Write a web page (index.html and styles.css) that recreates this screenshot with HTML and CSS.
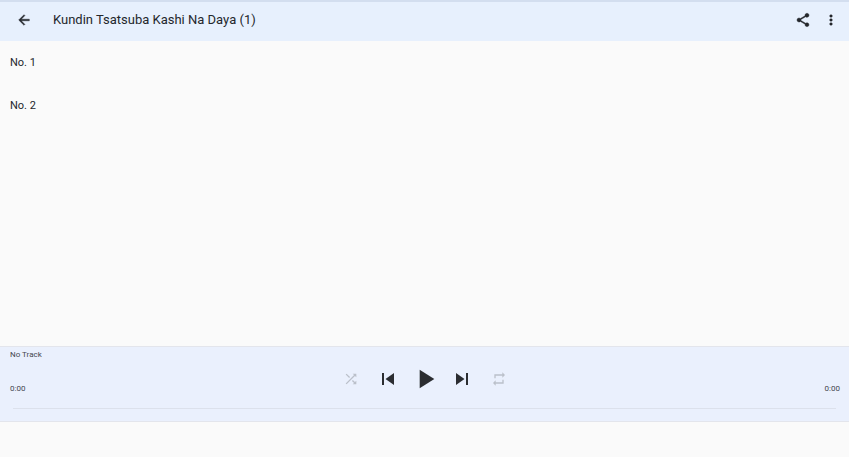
FILE: index.html
```html
<!DOCTYPE html>
<html lang="ha">
<head>
<meta charset="utf-8">
<meta name="viewport" content="width=device-width, initial-scale=1">
<title>Kundin Tsatsuba Kashi Na Daya (1)</title>
<link rel="stylesheet" href="styles.css">
</head>
<body>
<header class="app-bar">
  <button class="icon-button" aria-label="Back"><svg class="icon" viewBox="0 0 24 24"><path d="M20 10.8H8l5.4-5.4L12 4l-8 8 8 8 1.4-1.4L8 13.200H20z"/></svg></button>
  <h1 class="title">Kundin Tsatsuba Kashi Na Daya (1)</h1>
  <button class="icon-button" aria-label="Share"><svg class="icon" viewBox="0 0 24 24"><path d="M18 16.080c-.76 0-1.440.3-1.960.77L8.910 12.700c.05-.23.09-.46.09-.7s-.04-.47-.09-.7l7.050-4.110c.54.5 1.250.81 2.040.81 1.660 0 3-1.340 3-3s-1.340-3-3-3-3 1.340-3 3c0 .24.04.47.09.7L8.040 9.810C7.500 9.310 6.790 9 6 9c-1.660 0-3 1.340-3 3s1.340 3 3 3c.79 0 1.500-.31 2.040-.81l7.120 4.160c-.05.21-.08.43-.08.65 0 1.610 1.310 2.920 2.920 2.920s2.920-1.310 2.920-2.920-1.310-2.920-2.920-2.920z"/></svg></button>
  <button class="icon-button" aria-label="More options"><svg class="icon" viewBox="0 0 24 24"><circle cx="12" cy="6" r="2"/><circle cx="12" cy="12" r="2"/><circle cx="12" cy="18" r="2"/></svg></button>
</header>
<main class="content">
  <ul class="tracks">
    <li class="track">No. 1</li>
    <li class="track">No. 2</li>
  </ul>
</main>
<section class="player" aria-label="Player">
  <p class="now-playing">No Track</p>
  <div class="transport">
    <span class="time">0:00</span>
    <div class="controls">
      <button class="control muted" aria-label="Shuffle"><svg class="icon" viewBox="0 0 24 24"><path d="M10.590 9.170L5.410 4 4 5.410l5.170 5.170 1.420-1.410zM14.500 4l2.040 2.040L4 18.590 5.410 20 17.960 7.460 20 9.500V4h-5.500zm.33 9.410l-1.410 1.410 3.130 3.130L14.500 20H20v-5.500l-2.040 2.040-3.130-3.130z"/></svg></button>
      <button class="control" aria-label="Previous"><svg class="icon icon-skip" viewBox="0 0 24 24"><path d="M6 6h2v12H6zm3.500 6l8.500 6V6z"/></svg></button>
      <button class="control" aria-label="Play"><svg class="icon icon-play" viewBox="0 0 24 24"><path d="M8 5v14l11-7z"/></svg></button>
      <button class="control" aria-label="Next"><svg class="icon icon-skip" viewBox="0 0 24 24"><path d="M6 18l8.500-6L6 6v12zM16 6v12h2V6h-2z"/></svg></button>
      <button class="control muted" aria-label="Repeat"><svg class="icon" viewBox="0 0 24 24"><path d="M7 7h10v3l4-4-4-4v3H5v6h2V7zm10 10H7v-3l-4 4 4 4v-3h12v-6h-2v4z"/></svg></button>
    </div>
    <span class="time time-end">0:00</span>
  </div>
  <input class="seek" type="range" min="0" max="100" value="0" aria-label="Seek">
</section>
</body>
</html>
```

FILE: styles.css
```css
* {
  box-sizing: border-box;
}

body {
  display: flex;
  flex-direction: column;
  min-height: 100vh;
  margin: 0;
  padding-bottom: 35px;
  background: #fafafa;
  color: #24272c;
  font-family: Roboto, "Liberation Sans", sans-serif;
}

button {
  display: flex;
  align-items: center;
  justify-content: center;
  padding: 0;
  border: 0;
  background: none;
  color: inherit;
}

.icon {
  width: 16px;
  height: 16px;
  fill: currentColor;
}

.app-bar {
  display: flex;
  align-items: center;
  height: 41px;
  padding: 0 4px 3px 10px;
  border-top: 2px solid #d3deef;
  background: #e7f0fd;
}

.icon-button {
  width: 28px;
  height: 28px;
}

.icon-button .icon {
  stroke: currentColor;
  stroke-width: 0.6;
}

.title {
  flex: 1;
  margin: 0;
  padding-left: 15px;
  font-size: 13px;
  font-weight: 400;
  line-height: 20px;
}

.content {
  flex: 1;
}

.tracks {
  margin: 0;
  padding: 0;
  list-style: none;
}

.track {
  padding: 14px 10px;
  font-size: 11px;
  line-height: 15px;
}

.player {
  border-top: 1px solid #e3e5ec;
  border-bottom: 1px solid #e3e5ec;
  background: #eaf0fd;
}

.now-playing {
  margin: 0;
  padding: 0 10px;
  color: #44474f;
  font-size: 8px;
  line-height: 16px;
}

.transport {
  display: grid;
  grid-template-columns: 1fr auto 1fr;
  align-items: end;
  padding: 0 9px 0 10px;
}

.time {
  color: #44474f;
  font-size: 8px;
  line-height: 12px;
}

.time-end {
  text-align: right;
}

.controls {
  display: flex;
  color: #2b2d31;
}

.control {
  width: 37px;
  height: 32px;
}

.muted {
  color: #bbc0ca;
}

.icon-skip {
  width: 24px;
  height: 24px;
}

.icon-play {
  width: 32px;
  height: 32px;
}

.seek {
  display: block;
  width: calc(100% - 26px);
  height: 12px;
  margin: 7px 13px;
  appearance: none;
  background: none;
}

.seek::-webkit-slider-runnable-track {
  height: 1px;
  background: #dce1ec;
}

.seek::-webkit-slider-thumb {
  appearance: none;
  width: 1px;
  height: 1px;
  background: #dce1ec;
}
```
